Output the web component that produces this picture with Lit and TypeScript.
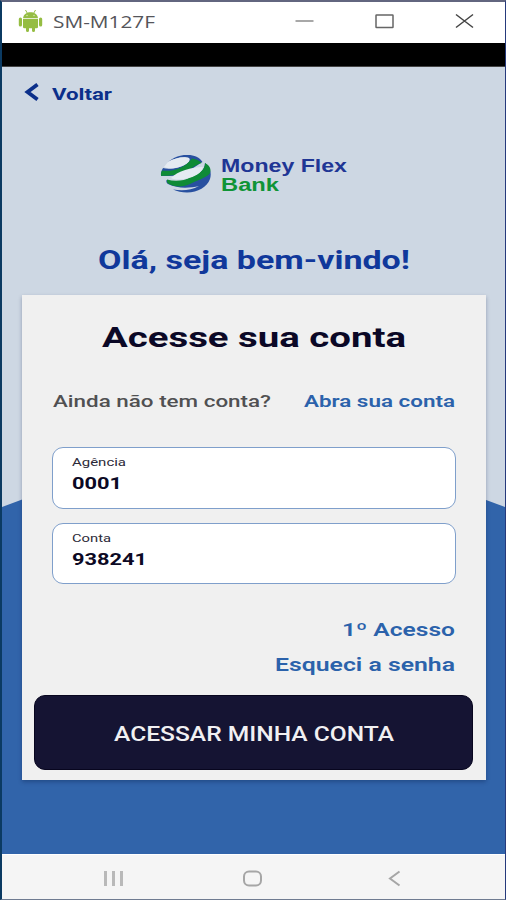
import { LitElement, html, svg, css } from "lit";
import { customElement, property } from "lit/decorators.js";

/** One line of text whose glyphs are set to a fixed width. */
@customElement("wide-text")
class WideText extends LitElement {
  @property() text = "";
  @property({ type: Number }) width = 100;
  @property({ type: Number }) height = 20;
  @property({ type: Number }) baseline = 15;

  static styles = css`
    :host { display: block; flex: none; }
    svg { display: block; overflow: visible; }
    text { fill: currentColor; }
  `;

  render() {
    return html`<svg width=${this.width} height=${this.height}>
      ${svg`<text x="0" y=${this.baseline} textLength=${this.width} lengthAdjust="spacingAndGlyphs">${this.text}</text>`}
    </svg>`;
  }
}

@customElement("app-root")
class AppRoot extends LitElement {
  static styles = css`
    :host {
      display: block;
      width: 506px;
      height: 900px;
      font-family: Roboto, "Liberation Sans", sans-serif;
      overflow: hidden;
    }
    * { box-sizing: border-box; }
    svg { display: block; flex: none; }
    .window {
      height: 900px;
      display: flex;
      flex-direction: column;
      border-left: 2px solid #0b3a62;
      border-right: 1px solid #263a7c;
      border-top: 2px solid #62667f;
      border-bottom: 1px solid #6f7b91;
    }
    .titlebar {
      height: 41px;
      flex: none;
      background: #fff;
      display: flex;
      align-items: flex-start;
      padding-left: 16px;
    }
    .droid { margin-top: 7px; }
    .device {
      margin: 6px 0 0 10px;
      font: 400 17px "Open Sans", "Noto Sans", sans-serif;
      color: #55555a;
    }
    .controls { display: flex; margin: 9px 31px 0 auto; gap: 61px; }
    .status { height: 24px; flex: none; background: #000; border-bottom: 1px solid #444; }
    .screen {
      position: relative;
      height: 787px;
      flex: none;
      background: #cdd7e3;
      display: flex;
      flex-direction: column;
    }
    .wave { position: absolute; left: 0; top: 0; }
    .content { position: relative; display: flex; flex-direction: column; }
    .back { display: flex; align-items: flex-start; padding: 16px 0 0 22px; height: 86px; gap: 13px; color: #0b2f8a; }
    .back wide-text { font-weight: 700; font-size: 16.5px; }
    .brand { display: flex; height: 95px; padding-left: 158px; gap: 9px; }
    .brand-name { font: 700 17.5px "Liberation Sans", Arial, sans-serif; padding-top: 3px; }
    .money { color: #1f3695; }
    .bank { color: #0f9436; }
    .hello { margin-left: 96px; font-weight: 700; font-size: 26px; color: #10389b; }
    .card {
      margin: 13px 0 0 20px;
      width: 464px;
      height: 485px;
      background: #f0f0f0;
      box-shadow: 0 2px 4px rgba(0, 20, 60, 0.3);
      display: flex;
      flex-direction: column;
    }
    .title { margin: 24px 0 0 80px; font-weight: 700; font-size: 27px; color: #0b0826; }
    .signup { display: flex; margin: 35px 31px 0 31px; justify-content: space-between; font-size: 16.5px; }
    .muted { color: #505052; font-weight: 500; }
    .link { color: #2b62ab; font-weight: 700; }
    .signup .link, .links .link { font-weight: 600; }
    .field {
      margin: 0 30px;
      border: 1px solid #7f9fcb;
      border-radius: 11px;
      background: #fff;
      padding: 8px 0 0 19px;
      width: 404px;
    }
    .agency { height: 62px; margin-top: 29px; }
    .account { height: 61px; margin-top: 14px; }
    .label { font-size: 11.5px; font-weight: 400; color: #2c2938; }
    .value { font-size: 17px; font-weight: 700; color: #0c0924; }
    .links { display: flex; flex-direction: column; align-items: flex-end; margin: 35px 31px 0 0; gap: 11px; font-size: 18.5px; }
    .submit {
      margin: 17px 0 0 12px;
      width: 439px;
      height: 75px;
      border-radius: 11px;
      border: 1px solid #08061f;
      background: #151433;
      color: #f1f0f2;
      display: flex;
      justify-content: center;
      padding-top: 24px;
      font-size: 20px;
      font-weight: 500;
    }
    .nav { flex: 1; background: #f5f5f5; border-top: 1px solid #fff; display: flex; align-items: flex-start; }
    .recent { margin: 15px 0 0 101px; }
    .home { margin: 15px 0 0 119px; }
    .prev { margin: 15px 0 0 124px; }
  `;

  render() {
    return html`
      <div class="window">
        <header class="titlebar">
          <svg class="droid" width="25" height="25" viewBox="0 0 25 25" fill="#95bd42">
            <path d="M5 9.3C5.5 5.5 8 3.2 12.5 3.2S19.500 5.500 20 9.300Z" />
            <path d="M7.500 1L9.500 4.500M17.500 1L15.500 4.500" stroke="#95bd42" stroke-width="1" />
            <path d="M5 10H20V18Q20 19.300 18.500 19.300H17V21.500Q17 23 15.500 23T14 21.500V19.300H11V21.500Q11 23 9.500 23T8 21.500V19.300H6.500Q5 19.300 5 18Z" />
            <rect x="0.800" y="8.500" width="3.200" height="9" rx="1.600" />
            <rect x="21" y="8.500" width="3.200" height="9" rx="1.600" />
            <circle cx="9" cy="6.500" r="0.700" fill="#dbe9be" />
            <circle cx="16" cy="6.500" r="0.700" fill="#dbe9be" />
          </svg>
          <wide-text class="device" text="SM-M127F" width="102" height="24" baseline="19.500"></wide-text>
          <div class="controls">
            <svg width="19" height="20" stroke="#8b8b8b" stroke-width="1.500"><path d="M0.500 10H18.500" /></svg>
            <svg width="19" height="20" fill="none" stroke="#666" stroke-width="1.500"><rect x="1" y="4" width="17" height="12.500" rx="0.500" /></svg>
            <svg width="19" height="20" fill="none" stroke="#444" stroke-width="1.500"><path d="M1 3.500L18 16.500M18 3.500L1 16.500" /></svg>
          </div>
        </header>
        <div class="status"></div>
        <main class="screen">
          <svg class="wave" width="503" height="787"><path d="M0 440Q251 340 503 440V787H0Z" fill="#3164aa" /></svg>
          <div class="content">
            <div class="back">
              <svg width="15" height="19" fill="none" stroke="#0b2f8a" stroke-width="3.800"><path d="M13.500 1.500L3.500 9L13.500 16.500" /></svg>
              <wide-text text="Voltar" width="60" height="20" baseline="16.500"></wide-text>
            </div>
            <div class="brand">
              <svg width="52" height="42" viewBox="0 0 52 42">
                <path d="M8 9C14 4 21 1.500 28 2C34 2 40 4.500 42.500 9C35 13 31 18 22 21C14 23.500 6 23 1 23C0.500 20 1.500 17.500 3 15C9 17 21 15 27 10C31 7 30 4 25 4C19 4 13 6 8 9Z" fill="#2850a0" />
                <path d="M8 9C14 5 22 3.500 29 5C32 9 23 14 15 15C11 15.500 7 15.500 4 14Z" fill="#e5ebf2" />
                <path d="M2 17.500C11 19 24 16 32 5.500C36 6 40 8 41.500 10C34 12 30 18 21 20.500C13 23 6 22.500 1 23Q0.500 20 2 17.500Z" fill="#0f8b36" />
                <path d="M45 10C50 14 52 20 50 26C47 34 38 39.500 27 39.500C22 39.500 17 38.500 13 36.500C22 38 31 37.500 39 33C30 35 18 36 8 31C6.500 30 6 28.500 6.500 27C14 30 23 29 31 25C39 22 45 17 45 10Z" fill="#2850a0" />
                <path d="M48 12C51 15 51 18 49.500 21C44 26 37 27 30 31C23 34.500 14 34 8 30.500Q6.500 28.500 7 26.500C15 29 24 28 31 24C39 21 45 17 45 10Z" fill="#0f8b36" />
                <path d="M11 25C18 18 31 14 43 14C42 20 34 24 27 25.500C21 27 15 27 11 25Z" fill="#e5ebf2" />
              </svg>
              <div class="brand-name">
                <wide-text class="money" text="Money Flex" width="126" height="18" baseline="15.500"></wide-text>
                <wide-text class="bank" text="Bank" width="58" height="20" baseline="16.500"></wide-text>
              </div>
            </div>
            <wide-text class="hello" text="Olá, seja bem-vindo!" width="312" height="34" baseline="21"></wide-text>
            <section class="card">
              <wide-text class="title" text="Acesse sua conta" width="304" height="40" baseline="28"></wide-text>
              <div class="signup">
                <wide-text class="muted" text="Ainda não tem conta?" width="218" height="24" baseline="13"></wide-text>
                <wide-text class="link" text="Abra sua conta" width="151" height="24" baseline="13"></wide-text>
              </div>
              <div class="field agency">
                <wide-text class="label" text="Agência" width="54" height="14" baseline="10"></wide-text>
                <wide-text class="value" text="0001" width="50" height="22" baseline="19"></wide-text>
              </div>
              <div class="field account">
                <wide-text class="label" text="Conta" width="39" height="14" baseline="10"></wide-text>
                <wide-text class="value" text="938241" width="75" height="22" baseline="19"></wide-text>
              </div>
              <div class="links">
                <wide-text class="link" text="1º Acesso" width="113" height="24" baseline="17"></wide-text>
                <wide-text class="link" text="Esqueci a senha" width="180" height="24" baseline="17"></wide-text>
              </div>
              <div class="submit">
                <wide-text text="ACESSAR MINHA CONTA" width="280" height="28" baseline="21"></wide-text>
              </div>
            </section>
          </div>
        </main>
        <nav class="nav">
          <svg class="recent" width="21" height="17" stroke="#b9b9b9" stroke-width="3"><path d="M2.500 1V16M10.500 1V16M18.500 1V16" /></svg>
          <svg class="home" width="20" height="17" fill="none" stroke="#a6a6a6" stroke-width="2"><rect x="1" y="1.500" width="17" height="14" rx="5" /></svg>
          <svg class="prev" width="14" height="17" fill="none" stroke="#a6a6a6" stroke-width="2"><path d="M12.500 1.500L3 8.500L12.500 15.500" /></svg>
        </nav>
      </div>
    `;
  }
}
